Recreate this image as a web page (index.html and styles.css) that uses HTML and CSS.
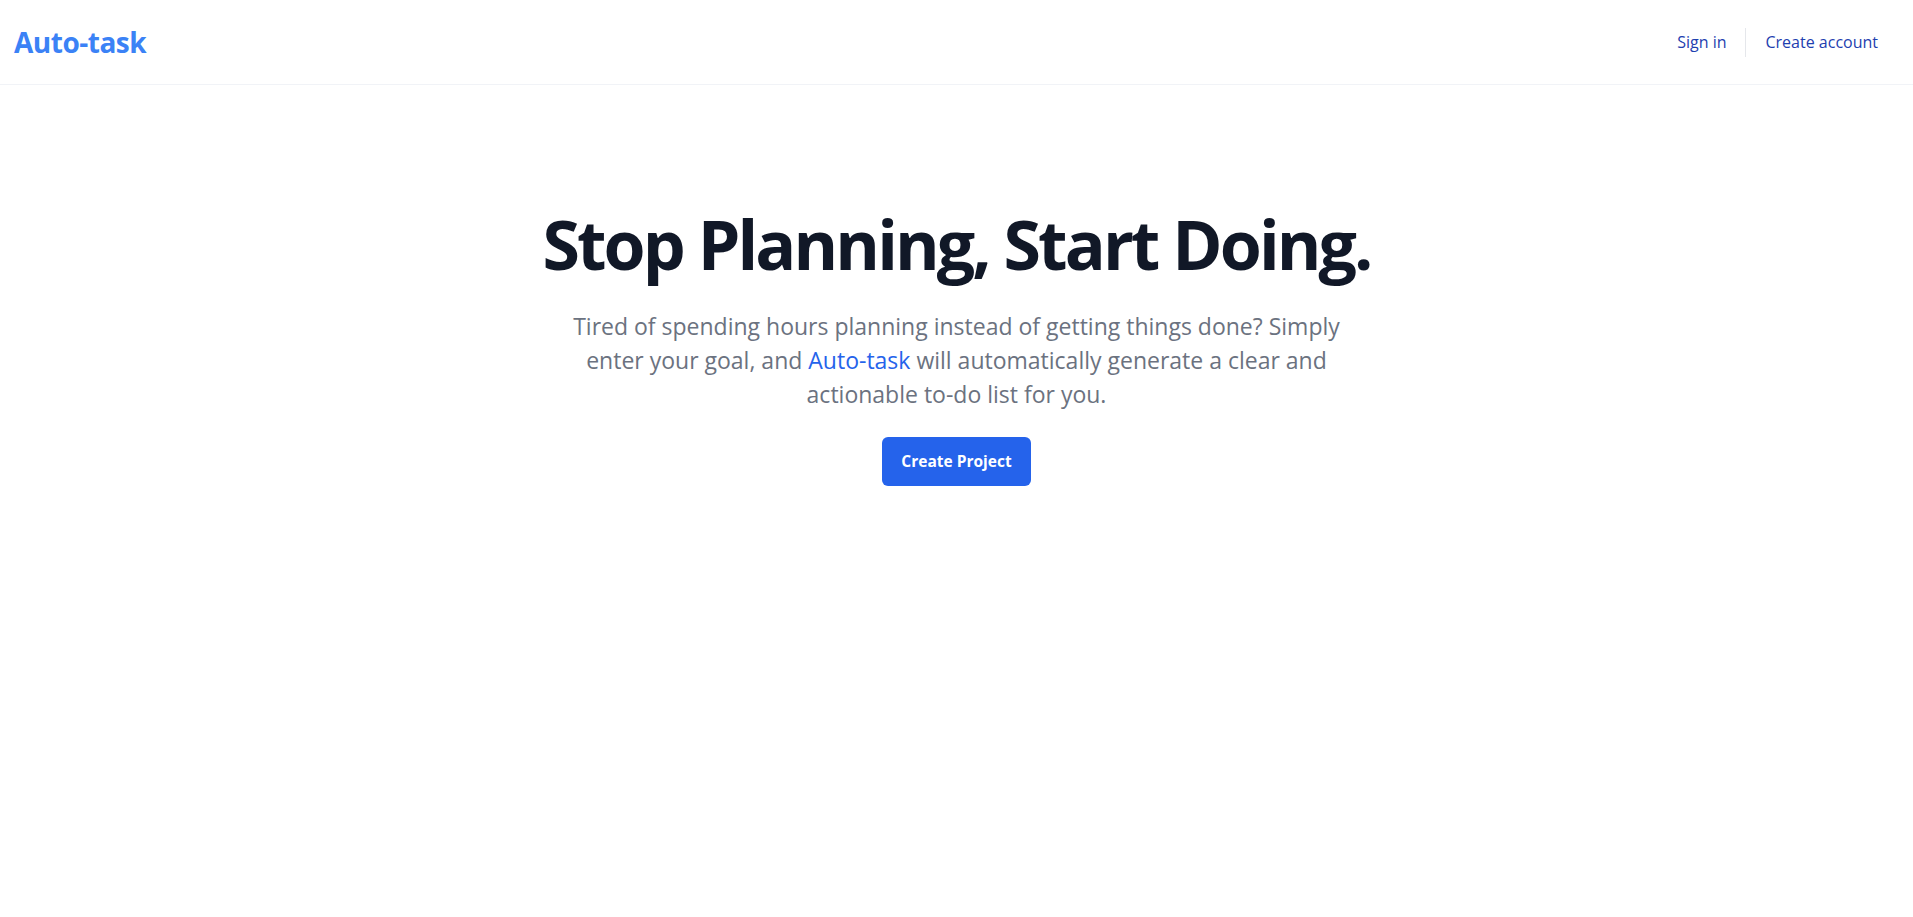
FILE: index.html
```html
<!DOCTYPE html>
<html lang="en">
<head>
<meta charset="utf-8">
<title>Auto-task</title>
<link rel="stylesheet" href="styles.css">
</head>
<body>
<header class="site-header">
  <a class="logo" href="#">Auto-task</a>
  <nav class="nav">
    <a class="nav-link" href="#">Sign in</a>
    <span class="nav-sep"></span>
    <a class="nav-link" href="#">Create account</a>
  </nav>
</header>
<main class="hero">
  <h1 class="hero-title">Stop Planning, Start Doing.</h1>
  <p class="hero-text">Tired of spending hours planning instead of getting things done? Simply enter your goal, and <span class="brand">Auto-task</span> will automatically generate a clear and actionable to-do list for you.</p>
  <a class="btn-primary" href="#">Create Project</a>
</main>
</body>
</html>
```
FILE: styles.css
```css
* { box-sizing: border-box; }
html, body { margin: 0; padding: 0; background: #ffffff; }
body { font-family: "Open Sans", "Noto Sans", sans-serif; color: #111827; }
a { text-decoration: none; }

.site-header {
  height: 85px;
  display: flex;
  align-items: center;
  justify-content: space-between;
  padding: 0 16px 0 14px;
  border-bottom: 1px solid #f1f3f7;
}
.logo {
  color: #3b82f6;
  font-weight: 700;
  font-size: 28px;
  letter-spacing: -0.5px;
}
.nav { display: flex; align-items: center; }
.nav-link {
  color: #1e40af;
  font-size: 16px;
  padding: 0 19px;
}
.nav-sep { width: 1px; height: 29px; background: #e5e7eb; }

.hero {
  display: flex;
  flex-direction: column;
  align-items: center;
  text-align: center;
  padding-top: 123px;
}
.hero-title {
  margin: 0;
  font-size: 68px;
  line-height: 72px;
  font-weight: 700;
  letter-spacing: -2.9px;
  color: #111827;
}
.hero-text {
  margin: 29px 0 0;
  max-width: 790px;
  font-size: 23px;
  line-height: 34px;
  color: #6b7280;
}
.brand { color: #2563eb; }
.btn-primary {
  margin-top: 26px;
  background: #2563eb;
  color: #ffffff;
  font-weight: 700;
  font-size: 15.5px;
  line-height: 25px;
  padding: 12px 19px;
  border-radius: 6px;
}
```
